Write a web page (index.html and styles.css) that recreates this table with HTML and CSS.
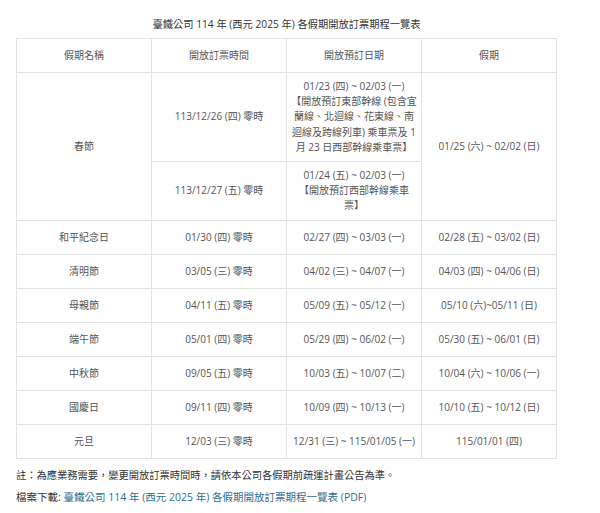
FILE: index.html
```html
<!DOCTYPE html>
<html lang="zh-Hant">
<head>
<meta charset="utf-8">
<link rel="stylesheet" href="styles.css">
</head>
<body>
<div class="page">
  <table class="sched">
    <caption>臺鐵公司 114 年 (西元 2025 年) 各假期開放訂票期程一覽表</caption>
    <thead>
      <tr><th>假期名稱</th><th>開放訂票時間</th><th>開放預訂日期</th><th>假期</th></tr>
    </thead>
    <tbody>
      <tr>
        <td rowspan="2">春節</td>
        <td>113/12/26 (四) 零時</td>
        <td class="fixed">01/23 (四) ~ 02/03 (一)<br>【開放預訂東部幹線 (包含宜<br>蘭線、北迴線、花東線、南<br>迴線及跨線列車) 乘車票及 1<br>月 23 日西部幹線乘車票】</td>
        <td rowspan="2">01/25 (六) ~ 02/02 (日)</td>
      </tr>
      <tr>
        <td>113/12/27 (五) 零時</td>
        <td class="fixed">01/24 (五) ~ 02/03 (一)<br>【開放預訂西部幹線乘車<br>票】</td>
      </tr>
      <tr><td>和平紀念日</td><td>01/30 (四) 零時</td><td>02/27 (四) ~ 03/03 (一)</td><td>02/28 (五) ~ 03/02 (日)</td></tr>
      <tr><td>清明節</td><td>03/05 (三) 零時</td><td>04/02 (三) ~ 04/07 (一)</td><td>04/03 (四) ~ 04/06 (日)</td></tr>
      <tr><td>母親節</td><td>04/11 (五) 零時</td><td>05/09 (五) ~ 05/12 (一)</td><td>05/10 (六)~05/11 (日)</td></tr>
      <tr><td>端午節</td><td>05/01 (四) 零時</td><td>05/29 (四) ~ 06/02 (一)</td><td>05/30 (五) ~ 06/01 (日)</td></tr>
      <tr><td>中秋節</td><td>09/05 (五) 零時</td><td>10/03 (五) ~ 10/07 (二)</td><td>10/04 (六) ~ 10/06 (一)</td></tr>
      <tr><td>國慶日</td><td>09/11 (四) 零時</td><td>10/09 (四) ~ 10/13 (一)</td><td>10/10 (五) ~ 10/12 (日)</td></tr>
      <tr><td>元旦</td><td>12/03 (三) 零時</td><td class="fixed">12/31 (三) ~ 115/01/05 (一)</td><td>115/01/01 (四)</td></tr>
    </tbody>
  </table>
  <p class="note">註：為應業務需要，變更開放訂票時間時，請依本公司各假期前疏運計畫公告為準。</p>
  <p class="dl">檔案下載: <a href="#">臺鐵公司 114 年 (西元 2025 年) 各假期開放訂票期程一覽表 (PDF)</a></p>
</div>
</body>
</html>
```
FILE: styles.css
```css
html, body {
  margin: 0;
  padding: 0;
  background: #fff;
}
body {
  font-family: "Open Sans", "Noto Sans CJK TC", sans-serif;
  font-size: 10px;
  color: #444;
}
.page {
  padding: 16px 16px 0 16px;
}
.sched {
  width: 541px;
  border-collapse: collapse;
  table-layout: fixed;
}
.sched caption {
  font-size: 10.25px;
  line-height: 16px;
  color: #333;
  padding-bottom: 6px;
}
.sched th, .sched td {
  border: 1px solid #e3e3e3;
  text-align: center;
  vertical-align: middle;
  font-weight: normal;
  padding: 6px 5px;
  line-height: 15.2px;
  color: #555;
}
.sched td.fixed {
  white-space: nowrap;
  padding-left: 0;
  padding-right: 0;
}
.sched tr {
  height: 34px;
}
.note {
  margin: 8px 0 0 0;
  font-size: 10.25px;
  line-height: 16px;
  color: #333;
}
.dl {
  margin: 6px 0 0 0;
  font-size: 10.5px;
  line-height: 16px;
  color: #333;
}
.dl a {
  color: #2f6c8f;
  text-decoration: none;
}
```
